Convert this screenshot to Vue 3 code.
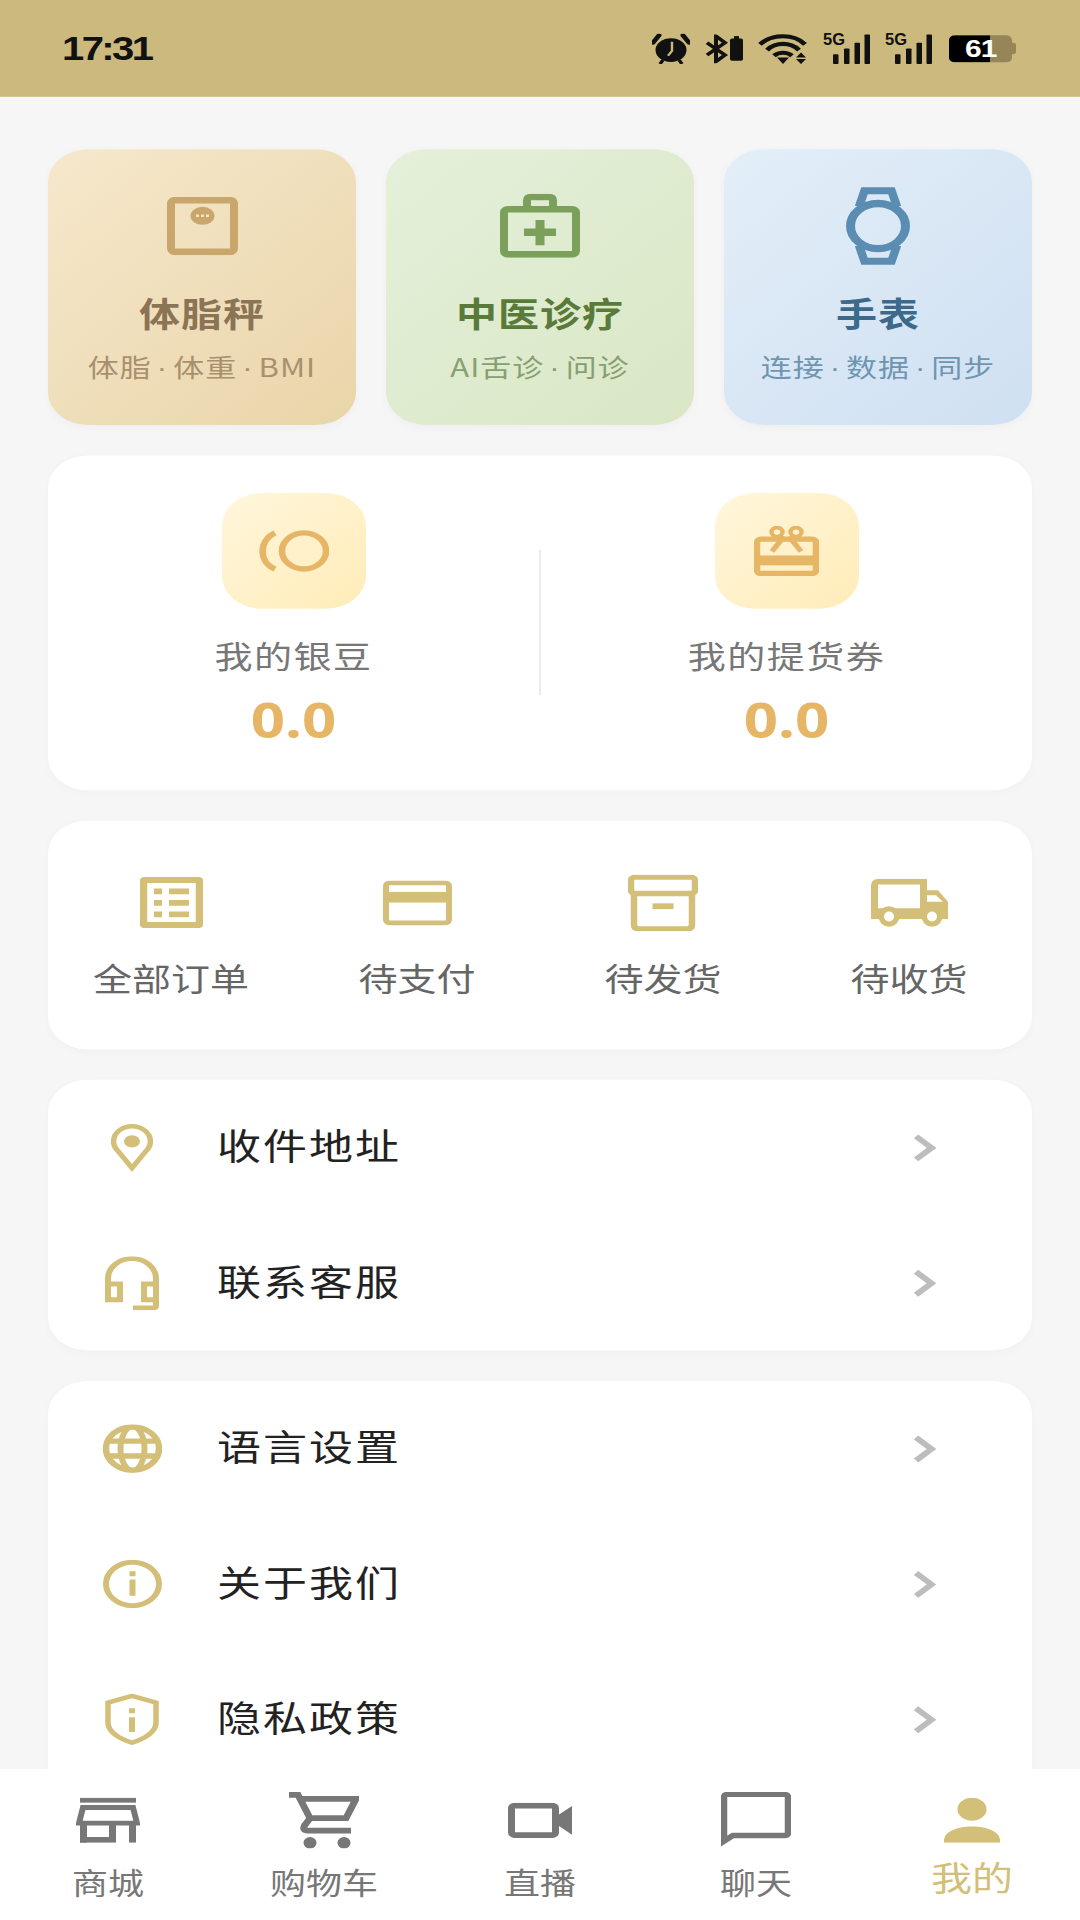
<template>
  <div class="page">
    <div class="status-bar">
      <span class="time">17:31</span>
      <div class="status-icons">
        <svg width="38" height="37" viewBox="0 0 38 37">
          <ellipse cx="19" cy="20" rx="15.500" ry="14.500" fill="#111" />
          <path d="M20 10v11l-4 6" fill="none" stroke="#ccb97e" stroke-width="2.400" />
          <path d="M1 11 7 2M37 11 31 2" stroke="#111" stroke-width="5" stroke-linecap="round" />
          <path d="M8 37l3-5M30 37l-3-5" stroke="#111" stroke-width="3.500" />
        </svg>
        <svg width="38" height="35" viewBox="0 0 38 35">
          <path d="M2 10 20 25 11 33V2l9 8L2 25" fill="none" stroke="#111" stroke-width="4" />
          <rect x="25" y="5" width="13" height="27" rx="2" fill="#111" />
          <rect x="29" y="2" width="5" height="4" fill="#111" />
        </svg>
        <svg width="50" height="37" viewBox="0 0 50 37">
          <path d="M2 13C14 0 36 0 47 13M9 20C18 10 32 10 41 20M16 27c5-5 13-5 18 0" fill="none" stroke="#111" stroke-width="5" />
          <path d="M19 29h12l-6 8z" fill="#111" />
          <path d="M43 23l5 6H38zM43 37l5-6H38z" fill="#111" />
        </svg>
        <svg class="signal" width="47" height="41" viewBox="0 -4 47 41">
          <text x="0" y="14" class="five-g" textLength="22" lengthAdjust="spacingAndGlyphs">5G</text>
          <rect x="10" y="25" width="5.500" height="12" rx="1" fill="#111" /><rect x="21" y="18" width="5.500" height="19" rx="1" fill="#111" /><rect x="31.500" y="11" width="5.500" height="26" rx="1" fill="#111" /><rect x="41.500" y="1" width="5.500" height="36" rx="1" fill="#111" />
        </svg>
        <svg class="signal" width="47" height="41" viewBox="0 -4 47 41">
          <text x="0" y="14" class="five-g" textLength="22" lengthAdjust="spacingAndGlyphs">5G</text>
          <rect x="10" y="25" width="5.500" height="12" rx="1" fill="#111" /><rect x="21" y="18" width="5.500" height="19" rx="1" fill="#111" /><rect x="31.500" y="11" width="5.500" height="26" rx="1" fill="#111" /><rect x="41.500" y="1" width="5.500" height="36" rx="1" fill="#111" />
        </svg>
        <div class="battery">
          <div class="battery-body">
            <div class="battery-fill"></div>
            <span class="battery-num">61</span>
          </div>
          <div class="battery-nub"></div>
        </div>
      </div>
    </div>

    <div class="content">
      <div class="feature-row">
        <div class="feature scale">
          <div class="feature-icon">
            <svg width="71" height="71" viewBox="0 0 71 71">
              <rect x="4" y="4" width="63" height="63" rx="4" fill="none" stroke="#c9a66b" stroke-width="8" />
              <ellipse cx="35.500" cy="23" rx="12" ry="11" fill="#c9a66b" />
              <path d="M29 23h3M34 23h3M39 23h3" stroke="#f3e3c3" stroke-width="3" />
            </svg>
          </div>
          <div class="feature-title">体脂秤</div>
          <div class="feature-sub">体脂<span class="dot">·</span>体重<span class="dot">·</span>BMI</div>
        </div>
        <div class="feature tcm">
          <div class="feature-icon">
            <svg width="80" height="78" viewBox="0 0 80 78">
              <rect x="4" y="19" width="72" height="55" rx="4" fill="none" stroke="#7ba05b" stroke-width="8" />
              <path d="M27 18V8q0-4 4-4h18q4 0 4 4v10" fill="none" stroke="#7ba05b" stroke-width="8" />
              <path d="M24 47h32M40 32v31" stroke="#7ba05b" stroke-width="9" />
            </svg>
          </div>
          <div class="feature-title">中医诊疗</div>
          <div class="feature-sub">AI舌诊<span class="dot">·</span>问诊</div>
        </div>
        <div class="feature watch">
          <div class="feature-icon">
            <svg width="64" height="95" viewBox="0 0 64 95">
              <circle cx="32" cy="47.500" r="27.500" fill="none" stroke="#5b8db3" stroke-width="9" />
              <path d="M13 24 18.500 4.500H45.500L51 24M13 71l5.500 19.500H45.500L51 71" fill="none" stroke="#5b8db3" stroke-width="8.500" />
            </svg>
          </div>
          <div class="feature-title">手表</div>
          <div class="feature-sub">连接<span class="dot">·</span>数据<span class="dot">·</span>同步</div>
        </div>
      </div>

      <div class="card stats">
        <div class="stat">
          <div class="stat-icon">
            <svg width="71" height="51" viewBox="0 0 71 51">
              <circle cx="46" cy="25.500" r="22" fill="none" stroke="#e6b566" stroke-width="6.500" />
              <path d="M17 3.500C1 12 0 39 17 47.500" fill="none" stroke="#e6b566" stroke-width="6.500" />
            </svg>
          </div>
          <div class="stat-label">我的银豆</div>
          <div class="stat-value">0.0</div>
        </div>
        <div class="stat-divider"></div>
        <div class="stat">
          <div class="stat-icon">
            <svg width="65" height="61" viewBox="0 0 65 61">
              <rect x="3" y="16" width="59" height="42" rx="4" fill="none" stroke="#e6b566" stroke-width="6.500" />
              <rect x="2" y="36" width="61" height="12" fill="#e6b566" />
              <circle cx="23" cy="7.500" r="5.500" fill="none" stroke="#e6b566" stroke-width="4.500" />
              <circle cx="42" cy="7.500" r="5.500" fill="none" stroke="#e6b566" stroke-width="4.500" />
              <path d="M18 31 30 13M47 31 35 13" stroke="#e6b566" stroke-width="5.500" />
            </svg>
          </div>
          <div class="stat-label">我的提货券</div>
          <div class="stat-value">0.0</div>
        </div>
      </div>

      <div class="card orders">
        <div class="order">
          <div class="order-icon">
            <svg width="63" height="62" viewBox="0 0 63 62">
              <rect x="3.500" y="3.500" width="56" height="55" rx="1" fill="none" stroke="#d4bf78" stroke-width="7.500" />
              <path d="M14 14h8v7h-8zM14 28h8v7h-8zM14 42h8v7h-8zM29 14h20v7H29zM29 28h20v7H29zM29 42h20v7H29z" fill="#d4bf78" />
            </svg>
          </div>
          <div class="order-label">全部订单</div>
        </div>
        <div class="order">
          <div class="order-icon">
            <svg width="69" height="55" viewBox="0 0 69 55">
              <rect x="3" y="3" width="63" height="49" rx="4" fill="none" stroke="#d4bf78" stroke-width="6" />
              <rect x="2" y="14" width="65" height="13" fill="#d4bf78" />
            </svg>
          </div>
          <div class="order-label">待支付</div>
        </div>
        <div class="order">
          <div class="order-icon">
            <svg width="70" height="69" viewBox="0 0 70 69">
              <rect x="3" y="3" width="64" height="20" rx="4" fill="none" stroke="#d4bf78" stroke-width="6.500" />
              <path d="M6 22V61q0 5 5 5H59q5 0 5-5V22" fill="none" stroke="#d4bf78" stroke-width="6.500" />
              <rect x="24.500" y="35" width="21" height="7" fill="#d4bf78" />
            </svg>
          </div>
          <div class="order-label">待发货</div>
        </div>
        <div class="order">
          <div class="order-icon">
            <svg width="77" height="59" viewBox="0 0 77 59">
              <path d="M3.500 40V8q0-4.500 4.500-4.500H52.500V40" fill="none" stroke="#d4bf78" stroke-width="7" />
              <path d="M0 36H54V14H67L77 28V49H0z" fill="#d4bf78" />
              <path d="M56 20H65L72 28H56z" fill="#fff" />
              <ellipse cx="18" cy="46" rx="10.500" ry="12.500" fill="#d4bf78" />
              <ellipse cx="18" cy="46" rx="5" ry="6" fill="#fff" />
              <ellipse cx="61" cy="46" rx="10.500" ry="12.500" fill="#d4bf78" />
              <ellipse cx="61" cy="46" rx="5" ry="6" fill="#fff" />
            </svg>
          </div>
          <div class="order-label">待收货</div>
        </div>
      </div>

      <div class="card list">
        <div class="row">
          <div class="row-icon">
            <svg width="42" height="58" viewBox="0 0 42 58">
              <path d="M21 53.500 7.500 33.500A18.400 18.400 0 1 1 34.500 33.500z" fill="none" stroke="#d4bf78" stroke-width="5.500" />
              <ellipse cx="21" cy="21" rx="8" ry="7.500" fill="#d4bf78" />
            </svg>
          </div>
          <span class="row-text">收件地址</span>
          <svg class="chevron" width="23" height="34" viewBox="0 0 23 34"><path d="M3 3 18.500 17 3 31" fill="none" stroke="#bdbdbd" stroke-width="6.500" /></svg>
        </div>
        <div class="row">
          <div class="row-icon">
            <svg width="54" height="66" viewBox="0 0 54 66">
              <path d="M3 45V27a24 24 0 0 1 48 0v18" fill="none" stroke="#d4bf78" stroke-width="6" />
              <path d="M3 34h12v19H3zM51 34H39v19h12z" fill="none" stroke="#d4bf78" stroke-width="6" />
              <path d="M51 52v8q0 3-3 3H28" fill="none" stroke="#d4bf78" stroke-width="6" />
            </svg>
          </div>
          <span class="row-text">联系客服</span>
          <svg class="chevron" width="23" height="34" viewBox="0 0 23 34"><path d="M3 3 18.500 17 3 31" fill="none" stroke="#bdbdbd" stroke-width="6.500" /></svg>
        </div>
      </div>

      <div class="card list list-last">
        <div class="row">
          <div class="row-icon">
            <svg width="59" height="59" viewBox="0 0 59 59">
              <circle cx="29.500" cy="29.500" r="26.500" fill="none" stroke="#d4bf78" stroke-width="6.500" />
              <ellipse cx="29.500" cy="29.500" rx="12" ry="26.500" fill="none" stroke="#d4bf78" stroke-width="6" />
              <path d="M4 20.500H55M4 38.500H55" stroke="#d4bf78" stroke-width="6.500" />
            </svg>
          </div>
          <span class="row-text">语言设置</span>
          <svg class="chevron" width="23" height="34" viewBox="0 0 23 34"><path d="M3 3 18.500 17 3 31" fill="none" stroke="#bdbdbd" stroke-width="6.500" /></svg>
        </div>
        <div class="row">
          <div class="row-icon">
            <svg width="59" height="59" viewBox="0 0 59 59">
              <circle cx="29.500" cy="29.500" r="26.500" fill="none" stroke="#d4bf78" stroke-width="6" />
              <path d="M26.500 14h6v6h-6zM26.500 24h6v20h-6z" fill="#d4bf78" />
            </svg>
          </div>
          <span class="row-text">关于我们</span>
          <svg class="chevron" width="23" height="34" viewBox="0 0 23 34"><path d="M3 3 18.500 17 3 31" fill="none" stroke="#bdbdbd" stroke-width="6.500" /></svg>
        </div>
        <div class="row">
          <div class="row-icon">
            <svg width="54" height="63" viewBox="0 0 54 63">
              <path d="M27 3 51 11V35C51 48 37 56 27 60 17 56 3 48 3 35V11z" fill="none" stroke="#d4bf78" stroke-width="5.500" />
              <path d="M24 18h6v6h-6zM24 29h6v18h-6z" fill="#d4bf78" />
            </svg>
          </div>
          <span class="row-text">隐私政策</span>
          <svg class="chevron" width="23" height="34" viewBox="0 0 23 34"><path d="M3 3 18.500 17 3 31" fill="none" stroke="#bdbdbd" stroke-width="6.500" /></svg>
        </div>
      </div>
    </div>

    <div class="tabbar">
      <div class="tab">
        <div class="tab-icon">
          <svg width="64" height="55" viewBox="0 0 64 55">
            <rect x="4" y="0" width="56" height="6" fill="#777" />
            <path d="M7 12H57L61 31H3z" fill="none" stroke="#777" stroke-width="6" />
            <path d="M7.500 31V55M56.500 31V55" fill="none" stroke="#777" stroke-width="7" />
            <path d="M4 51.500H36.500V31" fill="none" stroke="#777" stroke-width="7" />
          </svg>
        </div>
        <div class="tab-label">商城</div>
      </div>
      <div class="tab">
        <div class="tab-icon">
          <svg width="70" height="69" viewBox="0 0 70 69">
            <path d="M0 3.500H9L21 32H57L67 8.500H12" fill="none" stroke="#777" stroke-width="7" />
            <path d="M21 32 15.500 41Q13 47 19 47H62" fill="none" stroke="#777" stroke-width="7" />
            <ellipse cx="21" cy="62" rx="6.500" ry="7" fill="#777" />
            <ellipse cx="55" cy="62" rx="6.500" ry="7" fill="#777" />
          </svg>
        </div>
        <div class="tab-label">购物车</div>
      </div>
      <div class="tab">
        <div class="tab-icon">
          <svg width="64" height="43" viewBox="0 0 64 43">
            <rect x="3.500" y="3.500" width="44" height="36" rx="3" fill="none" stroke="#777" stroke-width="7" />
            <path d="M48 17 64 4V39L48 26z" fill="#777" />
          </svg>
        </div>
        <div class="tab-label">直播</div>
      </div>
      <div class="tab">
        <div class="tab-icon">
          <svg width="70" height="68" viewBox="0 0 70 68">
            <path d="M3 60V6.500Q3 3 6.500 3H63.500Q67 3 67 6.500V49.500Q67 53 63.500 53H12z" fill="none" stroke="#777" stroke-width="6.500" />
          </svg>
        </div>
        <div class="tab-label">聊天</div>
      </div>
      <div class="tab active">
        <div class="tab-icon">
          <svg width="56" height="55" viewBox="0 0 56 55">
            <ellipse cx="28" cy="14" rx="14.500" ry="14" fill="#d4bf78" />
            <path d="M0 55V52C0 42 12 35 28 35S56 42 56 52V55z" fill="#d4bf78" />
          </svg>
        </div>
        <div class="tab-label">我的</div>
      </div>
    </div>
  </div>
</template>

<script setup>
</script>

<style>
html, body, #app { margin: 0; height: 1920px; overflow: hidden; background: #f6f6f7; }
</style>

<style scoped>
/* the whole shot is squeezed vertically, so lay out at 1080x2340 and scale */
.page {
  position: relative; width: 1080px; height: 2340px; overflow: hidden;
  transform: scaleY(0.8205); transform-origin: top left;
  background: #f6f6f7;
  font-family: "Noto Sans CJK SC", "Noto Sans", sans-serif;
}
svg { display: block; }

.status-bar {
  height: 118px; padding: 0 64px 0 62px; box-sizing: border-box;
  display: flex; justify-content: space-between; align-items: center;
  background: #ccb97e; color: #111;
}
.time { font-family: "Liberation Sans", sans-serif; font-weight: 700; font-size: 40px; letter-spacing: -2.600px; }
.status-icons { display: flex; align-items: center; gap: 15px; }
.signal { margin-top: -4px; }
.five-g { font-family: "Liberation Sans", sans-serif; font-size: 19px; font-weight: 700; fill: #111; }
.battery { display: flex; align-items: center; margin-left: 2px; }
.battery-body { position: relative; width: 63px; height: 33px; border-radius: 6px; overflow: hidden; background: #958558; }
.battery-fill { width: 41px; height: 100%; background: #000; }
.battery-num {
  position: absolute; left: 16px; top: -2px; color: #fff;
  font-family: "Liberation Sans", sans-serif; font-weight: 700; font-size: 30px; line-height: 37px; letter-spacing: -1px;
}
.battery-nub { width: 4px; height: 14px; background: #958558; border-radius: 0 3px 3px 0; }

.content { padding: 64px 48px 0; display: flex; flex-direction: column; gap: 37px; }
.feature-row { display: grid; grid-template-columns: repeat(3, 1fr); gap: 30px; }
.feature {
  height: 336px; border-radius: 40px; padding-top: 43px; box-sizing: border-box;
  text-align: center; box-shadow: 0 3px 10px rgba(0,0,0,0.03);
}
.feature-icon { height: 100px; display: flex; align-items: center; justify-content: center; }
.feature-title { margin-top: 30px; font-size: 41px; line-height: 50px; font-weight: 700; letter-spacing: 1px; }
.feature-sub { margin-top: 21px; font-size: 31px; line-height: 40px; letter-spacing: 1px; }
.dot { font-family: "Liberation Sans", sans-serif; margin: 0 5px; }
.scale { background: linear-gradient(135deg, #f6e8cc, #e9d5a9); }
.scale .feature-title { color: #8b7355; }
.scale .feature-sub { color: #a8906f; }
.tcm { background: linear-gradient(135deg, #e5f0da, #d9e7c5); }
.tcm .feature-title { color: #5a7a3a; }
.tcm .feature-sub { color: #86a070; }
.watch { background: linear-gradient(135deg, #e3eef8, #cfe0f2); }
.watch .feature-title { color: #3d6a8a; }
.watch .feature-sub { color: #6f95b0; }

.card { background: #fff; border-radius: 40px; box-shadow: 0 3px 10px rgba(0,0,0,0.025); }

.stats { display: flex; height: 408px; padding-top: 46px; box-sizing: border-box; }
.stat { flex: 1; display: flex; flex-direction: column; align-items: center; }
.stat-icon {
  width: 144px; height: 141px; border-radius: 40px;
  display: flex; align-items: center; justify-content: center;
  background: linear-gradient(135deg, #fff6dc, #ffecb8);
}
.stat-label { margin-top: 33px; font-size: 38px; line-height: 46px; letter-spacing: 1.500px; color: #777; }
.stat-value { margin-top: 20px; font-family: "Noto Sans", sans-serif; font-size: 60px; line-height: 70px; font-weight: 700; color: #e6b566; }
.stat-divider { width: 2px; height: 177px; margin-top: 69px; background: #ebebeb; }

.orders { display: grid; grid-template-columns: repeat(4, 1fr); height: 279px; padding-top: 60px; box-sizing: border-box; }
.order { display: flex; flex-direction: column; align-items: center; }
.order-icon { height: 80px; display: flex; align-items: center; justify-content: center; }
.order-label { margin-top: 28px; font-size: 39px; line-height: 46px; color: #666; }

/* last card runs on under the tab bar */
.list-last { padding-bottom: 80px; }
.row { height: 165px; display: flex; align-items: center; padding: 0 96px 0 44px; }
.row-icon { width: 80px; display: flex; justify-content: center; }
.row-text { margin: -8px 0 0 45px; font-size: 44px; letter-spacing: 2px; color: #222; }
.chevron { margin-left: auto; }

.tabbar {
  position: absolute; left: 0; right: 0; bottom: 0; height: 184px;
  display: grid; grid-template-columns: repeat(5, 1fr);
  padding-top: 22px; box-sizing: border-box; background: #fff;
}
.tab { display: flex; flex-direction: column; align-items: center; }
.tab-icon { height: 80px; display: flex; align-items: center; justify-content: center; }
.tab-label { margin-top: 12px; font-size: 36px; line-height: 44px; color: #777; }
.active .tab-label { margin-top: 7px; font-size: 41px; color: #d4bf78; }
</style>
